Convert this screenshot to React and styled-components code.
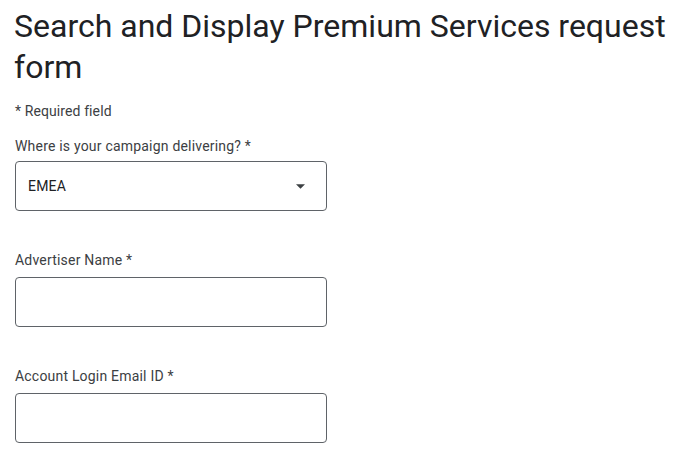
import React from 'react';
import styled, { createGlobalStyle } from 'styled-components';

const GlobalStyle = createGlobalStyle`
  body {
    margin: 0;
    background: #fff;
    font-family: Roboto, "Liberation Sans", Arial, sans-serif;
    color: #202124;
  }
`;

const Page = styled.main`
  padding: 6px 15px 0 14px;
`;

const Title = styled.h1`
  margin: 0;
  font-size: 32px;
  font-weight: 400;
  line-height: 41px;
  color: #202124;
`;

const Hint = styled.p`
  margin: 13px 0 0 1px;
  font-size: 14px;
  line-height: 20px;
  letter-spacing: 0.1px;
  color: #3c4043;
`;

const Field = styled.div`
  display: flex;
  flex-direction: column;
  margin-top: ${(p) => (p.first ? '15px' : '39px')};
`;

const Label = styled.label`
  font-size: 14px;
  line-height: 20px;
  letter-spacing: 0.2px;
  color: #3c4043;
  margin: 0 0 ${(p) => (p.first ? '5px' : '7px')} 1px;
`;

const Box = styled.div`
  box-sizing: border-box;
  width: 312px;
  height: 50px;
  margin-left: 1px;
  border: 1px solid #5f6368;
  border-radius: 4px;
  display: flex;
  align-items: center;
  justify-content: space-between;
  padding: 0 21px 0 12px;
  font-size: 14px;
  letter-spacing: 0.2px;
  color: #202124;
`;

const Arrow = () => (
  <svg width="9" height="5" viewBox="0 0 10 5" aria-hidden="true">
    <path d="M0 0l5 5 5-5z" fill="#3c4043" />
  </svg>
);

const fields = [
  { label: 'Advertiser Name *' },
  { label: 'Account Login Email ID *' },
];

export default function App() {
  return (
    <>
      <GlobalStyle />
      <Page>
        <Title>Search and Display Premium Services request form</Title>
        <Hint>* Required field</Hint>

        <Field first>
          <Label first>Where is your campaign delivering? *</Label>
          <Box>
            <span>EMEA</span>
            <Arrow />
          </Box>
        </Field>

        {fields.map((f) => (
          <Field key={f.label}>
            <Label>{f.label}</Label>
            <Box />
          </Field>
        ))}
      </Page>
    </>
  );
}
